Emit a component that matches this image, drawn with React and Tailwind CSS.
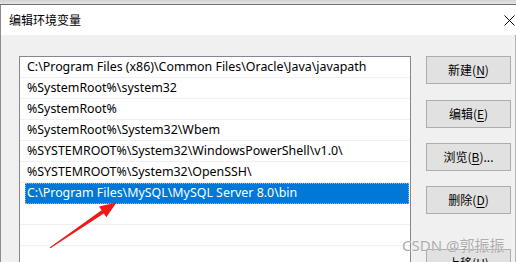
import React from "react";

const rows = [
  "C:\\Program Files (x86)\\Common Files\\Oracle\\Java\\javapath",
  "%SystemRoot%\\system32",
  "%SystemRoot%",
  "%SystemRoot%\\System32\\Wbem",
  "%SYSTEMROOT%\\System32\\WindowsPowerShell\\v1.0\\",
  "%SYSTEMROOT%\\System32\\OpenSSH\\",
  "C:\\Program Files\\MySQL\\MySQL Server 8.0\\bin",
  "",
  "",
  "",
];

const Btn = ({ label, k, suffix = "", className = "" }) => (
  <div
    className={
      "w-[85px] h-[28px] shrink-0 bg-[#e1e1e1] border border-[#adadad] flex items-center justify-center text-[12px] text-black " +
      className
    }
  >
    <span>
      {label}(<span className="underline underline-offset-2">{k}</span>){suffix}
    </span>
  </div>
);

export default function App() {
  return (
    <div
      className="w-[516px] h-[262px] overflow-hidden relative bg-[#f0f0f0] flex flex-col"
      style={{ fontFamily: '"Noto Sans", "Noto Sans CJK SC", sans-serif' }}
    >
      <div className="h-[4px] bg-gradient-to-b from-[#d2d2d2] to-[#e6e6e6] shrink-0" />
      <div className="h-px bg-[#707070] shrink-0" />
      <div className="flex-1 flex border-l border-[#8c8c8c] min-h-0">
        <div className="flex-1 flex flex-col min-w-0">
          <div className="h-[30px] bg-white flex items-center pl-[8px] pr-[1px] justify-between shrink-0">
            <span
              className="text-[12px] text-black"
              style={{ fontFamily: '"Noto Sans CJK SC", sans-serif' }}
            >
              编辑环境变量
            </span>
            <svg width="11" height="11" viewBox="0 0 11 11">
              <path d="M0.5 0.5 L10.5 10.5 M10.5 0.5 L0.5 10.5" stroke="#000" strokeWidth="1" />
            </svg>
          </div>
          <div className="flex-1 flex pt-[21px] pl-[18px] min-h-0 border-r border-[#b4b4b4]">
            <div className="w-[392px] border border-[#828790] border-b-0 bg-white flex flex-col pt-0">
              {rows.map((r, i) => {
                const sel = i === 6;
                return (
                  <div
                    key={i}
                    className={
                      "h-[21px] shrink-0 flex " +
                      (sel ? "" : "border-b border-[#f0f0f0]")
                    }
                  >
                    <div
                      className={
                        "ml-[5px] mr-[1px] flex-1 flex items-center pl-[2px] text-[12.4px] whitespace-nowrap " +
                        (sel
                          ? "bg-[#0078d7] text-white outline-1 outline-dotted outline-[#e8a060] -outline-offset-1"
                          : "text-black")
                      }
                    >
                      {r}
                    </div>
                  </div>
                );
              })}
            </div>
            <div
              className="flex flex-col ml-[15px]"
              style={{ fontFamily: '"Noto Sans CJK SC", sans-serif' }}
            >
              <Btn label="新建" k="N" />
              <Btn label="编辑" k="E" className="mt-[16px]" />
              <Btn label="浏览" k="B" suffix="..." className="mt-[15px]" />
              <Btn label="删除" k="D" className="mt-[15px]" />
              <Btn label="上移" k="U" className="mt-[35px]" />
            </div>
          </div>
        </div>
      </div>
      <svg
        className="absolute left-0 top-0 pointer-events-none"
        width="516"
        height="262"
        viewBox="0 0 516 262"
      >
        <polygon
          points="49.6,247.4 101.6,210.3 99,206.6 116.5,202.5 106.4,217.2 103.8,213.5 50.4,248.2"
          fill="#f01818"
        />
      </svg>
      <div
        className="absolute left-[402px] top-[234px] text-[15px] text-[#adadad] whitespace-nowrap"
        style={{
          fontFamily: '"Noto Sans", "Noto Sans CJK SC", sans-serif',
          textShadow: "0 0 1px rgba(255,255,255,0.9)",
        }}
      >
        CSDN @郭振振
      </div>
    </div>
  );
}
